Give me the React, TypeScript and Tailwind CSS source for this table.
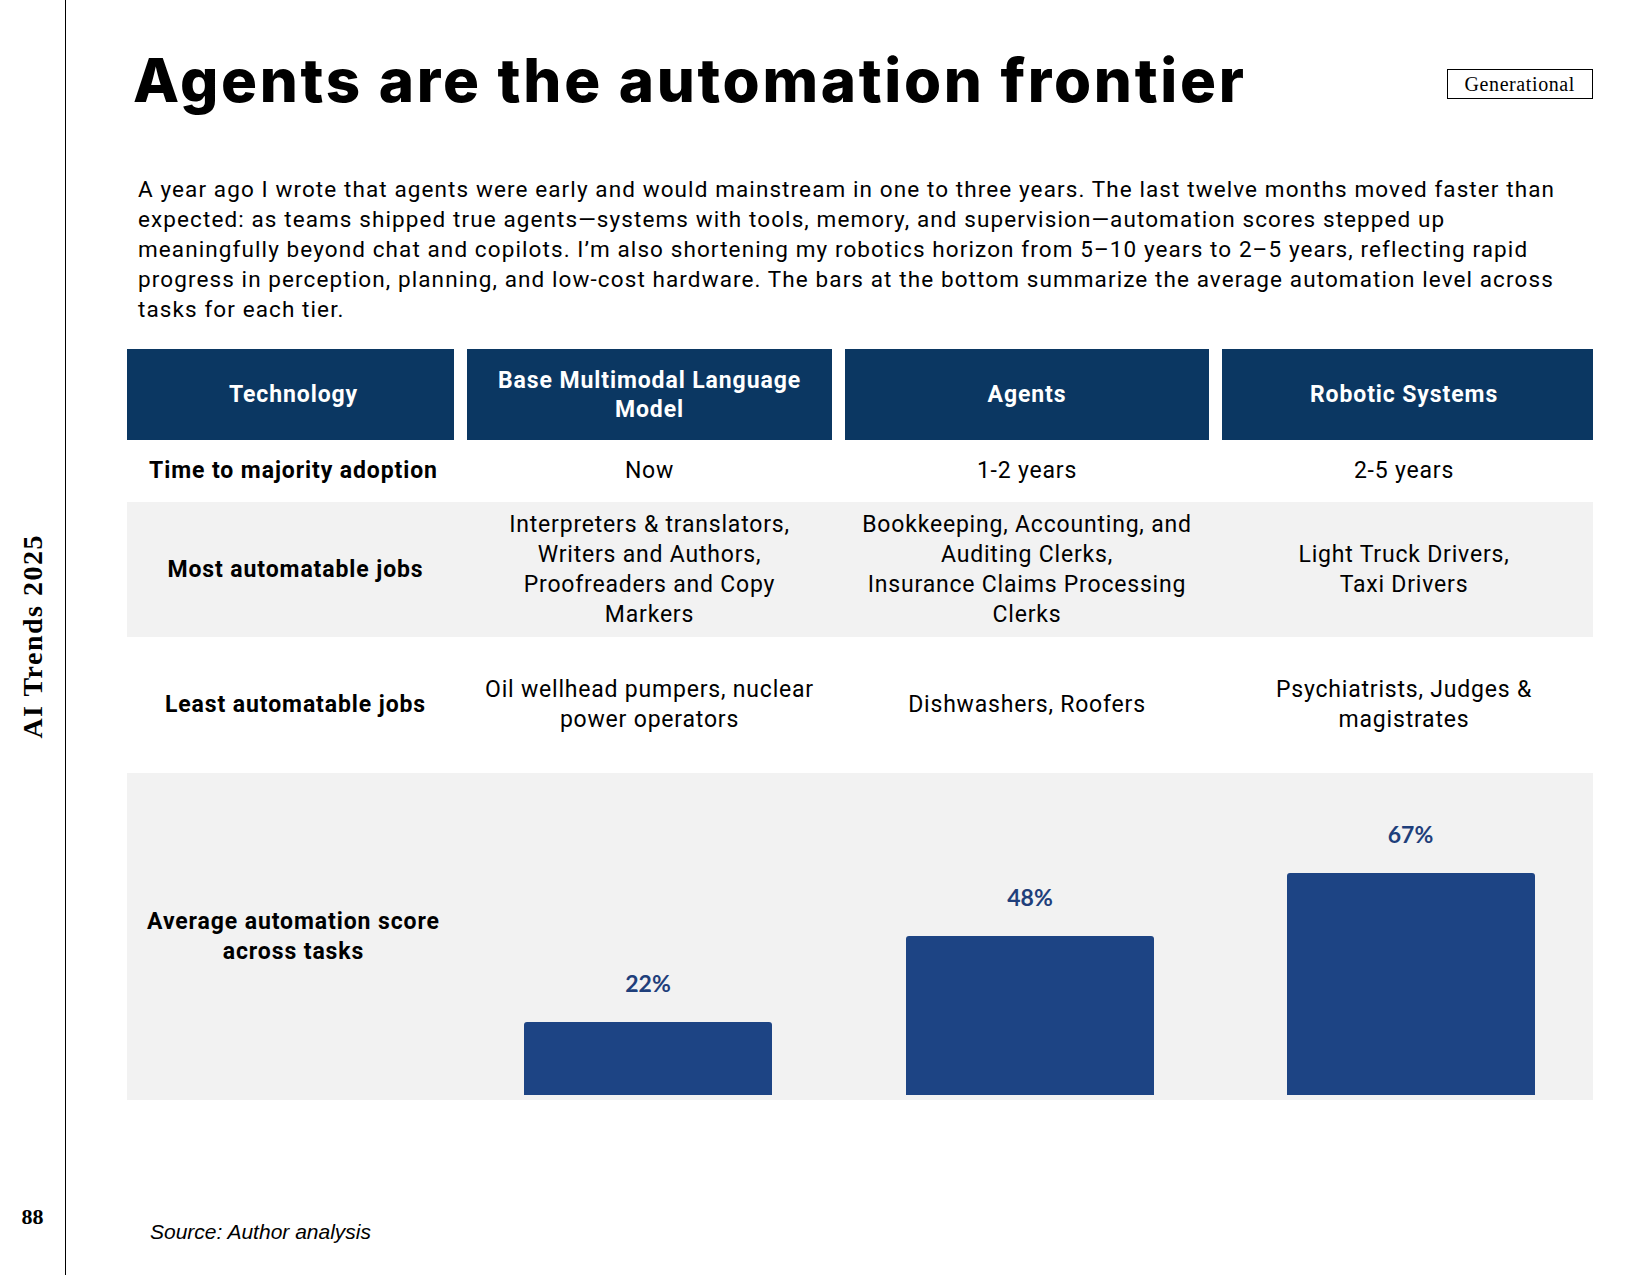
const COLS = "grid grid-cols-[327px_365px_364px_371px] gap-x-[13px]";

const BARS = [
  { label: "22%", value: 22, shift: "mr-[3px]" },
  { label: "48%", value: 48, shift: "ml-[6px]" },
  { label: "67%", value: 67, shift: "ml-[6px]" },
];

function Cell({ children, bold, pad = "px-[12px]" }: { children: React.ReactNode; bold?: boolean; pad?: string }) {
  return (
    <div
      className={
        "flex items-center justify-center text-center text-[23px] leading-[30px] " +
        pad +
        (bold ? " font-bold tracking-[0.9px]" : " font-normal tracking-[0.8px]")
      }
    >
      <p>{children}</p>
    </div>
  );
}

export default function App() {
  return (
    <div className="flex h-[1275px] w-[1649px] bg-white font-['Roboto',sans-serif] text-black">
      <aside className="flex w-[66px] shrink-0 flex-col items-center border-r-[1.5px] border-black pt-[44px]">
        <div className="flex-1" />
        <span className="rotate-180 font-['Liberation_Serif',serif] text-[28px] font-bold leading-none tracking-[1.5px] [writing-mode:vertical-rl]">
          AI Trends 2025
        </span>
        <div className="flex flex-1 flex-col justify-end pb-[46px]">
          <span className="font-['Liberation_Serif',serif] text-[22px] font-bold leading-[24px]">88</span>
        </div>
      </aside>

      <main className="flex flex-1 flex-col pl-[61px] pr-[56px]">
        <header className="mt-[45px] flex items-center justify-between">
          <h1 className="ml-[6px] font-['Inter',sans-serif] text-[60px] font-extrabold leading-[70px] tracking-[2.7px]">
            Agents are the automation frontier
          </h1>
          <span className="mt-[8px] border border-black px-[17px] font-['Liberation_Serif',serif] text-[20px] leading-[28px] tracking-[0.6px]">
            Generational
          </span>
        </header>

        <p className="ml-[11px] mt-[59px] w-[1436px] text-[22.5px] leading-[30px] tracking-[1.1px]">
          A year ago I wrote that agents were early and would mainstream in one to three years. The last twelve months moved
          faster than expected: as teams shipped true agents—systems with tools, memory, and supervision—automation scores
          stepped up meaningfully beyond chat and copilots. I’m also shortening my robotics horizon from 5–10 years to 2–5
          years, reflecting rapid progress in perception, planning, and low-cost hardware. The bars at the bottom summarize the
          average automation level across tasks for each tier.
        </p>

        <section className="mt-[25px]">
          <div className={COLS + " h-[91px]"}>
            {[
              { h: "Technology", pad: "pl-[30px] pr-[24px]" },
              { h: "Base Multimodal Language Model", pad: "px-[24px]" },
              { h: "Agents", pad: "px-[24px]" },
              { h: "Robotic Systems", pad: "pl-[24px] pr-[31px]" },
            ].map(({ h, pad }) => (
              <div
                key={h}
                className={
                  "flex items-center justify-center bg-[#0b3762] text-center text-[23px] font-bold leading-[29px] tracking-[0.9px] text-white " +
                  pad
                }
              >
                {h}
              </div>
            ))}
          </div>

          <div className={COLS + " h-[62px]"}>
            <Cell bold pad="pl-[18px] pr-[12px]">
              Time to majority adoption
            </Cell>
            <Cell>Now</Cell>
            <Cell>1-2 years</Cell>
            <Cell pad="pl-[12px] pr-[19px]">2-5 years</Cell>
          </div>

          <div className={COLS + " h-[135px] bg-[#f2f2f2]"}>
            <Cell bold pad="pl-[22px] pr-[12px]">
              Most automatable jobs
            </Cell>
            <Cell>
              Interpreters &amp; translators,
              <br />
              Writers and Authors,
              <br />
              Proofreaders and Copy
              <br />
              Markers
            </Cell>
            <Cell>
              Bookkeeping, Accounting, and
              <br />
              Auditing Clerks,
              <br />
              Insurance Claims Processing Clerks
            </Cell>
            <Cell pad="pl-[12px] pr-[19px]">
              Light Truck Drivers,
              <br />
              Taxi Drivers
            </Cell>
          </div>

          <div className={COLS + " h-[136px]"}>
            <Cell bold pad="pl-[22px] pr-[12px]">
              Least automatable jobs
            </Cell>
            <Cell>Oil wellhead pumpers, nuclear power operators</Cell>
            <Cell>Dishwashers, Roofers</Cell>
            <Cell pad="pl-[12px] pr-[19px]">Psychiatrists, Judges &amp; magistrates</Cell>
          </div>

          <div className={COLS + " h-[327px] bg-[#f2f2f2]"}>
            <Cell bold pad="pl-[18px] pr-[12px]">
              Average automation score
              <br />
              across tasks
            </Cell>
            {BARS.map((b) => (
              <div key={b.label} className={"flex flex-col items-center justify-end pb-[5px] " + b.shift}>
                <span className="mb-[24px] font-['Lato',sans-serif] text-[23px] font-bold leading-[30px] text-[#1f3f7b]">
                  {b.label}
                </span>
                <div className="w-[248px] rounded-t-[3px] bg-[#1d4484]" style={{ height: b.value * 3.32 }} />
              </div>
            ))}
          </div>
        </section>

        <p className="ml-[23px] mt-[120px] font-['Liberation_Sans',sans-serif] text-[21px] italic leading-[24px]">
          Source: Author analysis
        </p>
      </main>
    </div>
  );
}
